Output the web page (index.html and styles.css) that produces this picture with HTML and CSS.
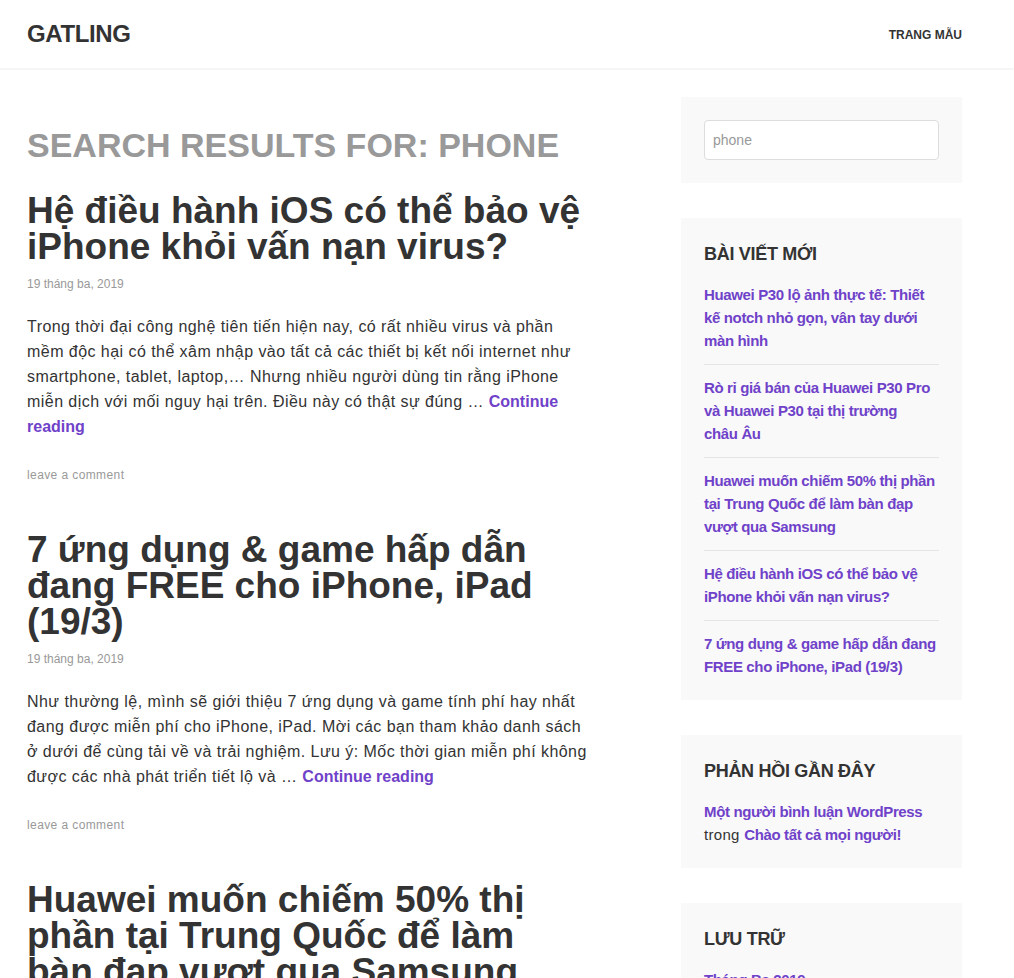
FILE: index.html
```html
<!DOCTYPE html>
<html lang="vi">
<head>
<meta charset="utf-8">
<title>Search Results for “phone” – Gatling</title>
<link rel="stylesheet" href="styles.css">
</head>
<body>
<header class="site-header">
  <div class="header-inner">
    <a class="site-title" href="#">GATLING</a>
    <nav class="main-nav"><a href="#">TRANG MẪU</a></nav>
  </div>
</header>
<div class="page">
  <main class="content">
    <h1 class="page-title">Search Results for: phone</h1>

    <article class="post">
      <h2 class="entry-title"><a href="#">Hệ điều hành iOS có thể bảo vệ iPhone khỏi vấn nạn virus?</a></h2>
      <div class="entry-meta">19 tháng ba, 2019</div>
      <p class="entry-summary">Trong thời đại công nghệ tiên tiến hiện nay, có rất nhiều virus và phần mềm độc hại có thể xâm nhập vào tất cả các thiết bị kết nối internet như smartphone, tablet, laptop,… Nhưng nhiều người dùng tin rằng iPhone miễn dịch với mối nguy hại trên. Điều này có thật sự đúng … <a class="more" href="#">Continue reading</a></p>
      <div class="entry-footer"><a href="#">leave a comment</a></div>
    </article>

    <article class="post">
      <h2 class="entry-title"><a href="#">7 ứng dụng &amp; game hấp dẫn đang FREE cho iPhone, iPad (19/3)</a></h2>
      <div class="entry-meta">19 tháng ba, 2019</div>
      <p class="entry-summary">Như thường lệ, mình sẽ giới thiệu 7 ứng dụng và game tính phí hay nhất đang được miễn phí cho iPhone, iPad. Mời các bạn tham khảo danh sách ở dưới để cùng tải về và trải nghiệm. Lưu ý: Mốc thời gian miễn phí không được các nhà phát triển tiết lộ và … <a class="more" href="#">Continue reading</a></p>
      <div class="entry-footer"><a href="#">leave a comment</a></div>
    </article>

    <article class="post">
      <h2 class="entry-title"><a href="#">Huawei muốn chiếm 50% thị phần tại Trung Quốc để làm bàn đạp vượt qua Samsung</a></h2>
      <div class="entry-meta">19 tháng ba, 2019</div>
    </article>
  </main>

  <aside class="sidebar">
    <section class="widget widget-search">
      <input class="search-field" type="search" value="phone" aria-label="Search">
    </section>

    <section class="widget">
      <h3 class="widget-title">Bài viết mới</h3>
      <ul class="widget-list">
        <li><a href="#">Huawei P30 lộ ảnh thực tế: Thiết kế notch nhỏ gọn, vân tay dưới màn hình</a></li>
        <li><a href="#">Rò rỉ giá bán của Huawei P30 Pro và Huawei P30 tại thị trường châu&nbsp;Âu</a></li>
        <li><a href="#">Huawei muốn chiếm 50% thị phần tại Trung Quốc để làm bàn đạp vượt qua Samsung</a></li>
        <li><a href="#">Hệ điều hành iOS có thể bảo vệ iPhone khỏi vấn nạn virus?</a></li>
        <li><a href="#">7 ứng dụng &amp; game hấp dẫn đang FREE cho iPhone, iPad (19/3)</a></li>
      </ul>
    </section>

    <section class="widget">
      <h3 class="widget-title">Phản hồi gần đây</h3>
      <p class="widget-text"><a href="#">Một người bình luận WordPress</a> trong <a href="#">Chào tất cả mọi người!</a></p>
    </section>

    <section class="widget">
      <h3 class="widget-title">Lưu trữ</h3>
      <ul class="widget-list">
        <li><a href="#">Tháng Ba 2019</a></li>
      </ul>
    </section>
  </aside>
</div>
</body>
</html>
```

FILE: styles.css
```css
* { box-sizing: border-box; }

html, body {
  margin: 0;
  padding: 0;
  background: #fff;
}

body {
  font-family: "Liberation Sans", Arial, sans-serif;
  color: #333;
  font-size: 16px;
}

a { text-decoration: none; }

.site-header {
  height: 70px;
  border-bottom: 2px solid #f6f6f6;
  background: #fff;
}

.header-inner {
  width: 935px;
  margin-left: 27px;
  height: 68px;
  display: flex;
  align-items: center;
  justify-content: space-between;
}

.site-title {
  font-size: 24px;
  font-weight: 700;
  color: #333;
  letter-spacing: -0.4px;
}

.main-nav a {
  font-size: 12px;
  font-weight: 700;
  color: #333;
}

.page {
  width: 935px;
  margin-left: 27px;
  padding-top: 27px;
  display: flex;
  justify-content: space-between;
  align-items: flex-start;
}

.content {
  flex: 0 0 561px;
}

.page-title {
  margin: 27px 0 26px;
  font-size: 34px;
  line-height: 43px;
  font-weight: 700;
  text-transform: uppercase;
  color: #999;
  white-space: nowrap;
}

.post {
  margin-bottom: 48px;
}

.entry-title {
  margin: 0;
  font-size: 37px;
  line-height: 36px;
  font-weight: 700;
}

.entry-title a { color: #333; }

.entry-meta {
  margin-top: 10px;
  font-size: 12px;
  line-height: 18px;
  color: #999;
}

.entry-summary {
  margin: 21px 0 0;
  font-size: 16px;
  line-height: 25px;
  letter-spacing: 0.45px;
  color: #333;
}

.more {
  color: #6f42c9;
  font-weight: 700;
  letter-spacing: 0;
}

.entry-footer {
  margin-top: 27px;
  font-size: 12px;
  line-height: 18px;
  letter-spacing: 0.4px;
}

.entry-footer a { color: #999; }

.sidebar {
  flex: 0 0 281px;
  display: flex;
  flex-direction: column;
  gap: 35px;
}

.widget {
  background: #f9f9f9;
  padding: 23px 23px 22px;
}

.widget-search {
  padding: 23px;
}

.search-field {
  display: block;
  width: 100%;
  height: 40px;
  border: 1px solid #ddd;
  border-radius: 4px;
  background: #fff;
  padding: 0 8px;
  font-family: inherit;
  font-size: 14px;
  color: #999;
}

.widget-title {
  margin: 0 0 15px;
  font-size: 18px;
  line-height: 27px;
  font-weight: 700;
  letter-spacing: -0.3px;
  text-transform: uppercase;
  color: #333;
}

.widget-list {
  list-style: none;
  margin: 0;
  padding: 0;
}

.widget-list li {
  padding: 11.5px 0;
  border-bottom: 1px solid #e5e5e5;
  font-size: 15px;
  line-height: 23px;
}

.widget-list li:first-child { padding-top: 0; }
.widget-list li:last-child { padding-bottom: 0; border-bottom: 0; }

.widget-list a,
.widget-text a {
  color: #6f42c9;
  font-weight: 700;
  letter-spacing: -0.36px;
}

.widget-text {
  margin: 0;
  font-size: 15px;
  line-height: 23px;
  letter-spacing: 0.3px;
  color: #333;
}
```
